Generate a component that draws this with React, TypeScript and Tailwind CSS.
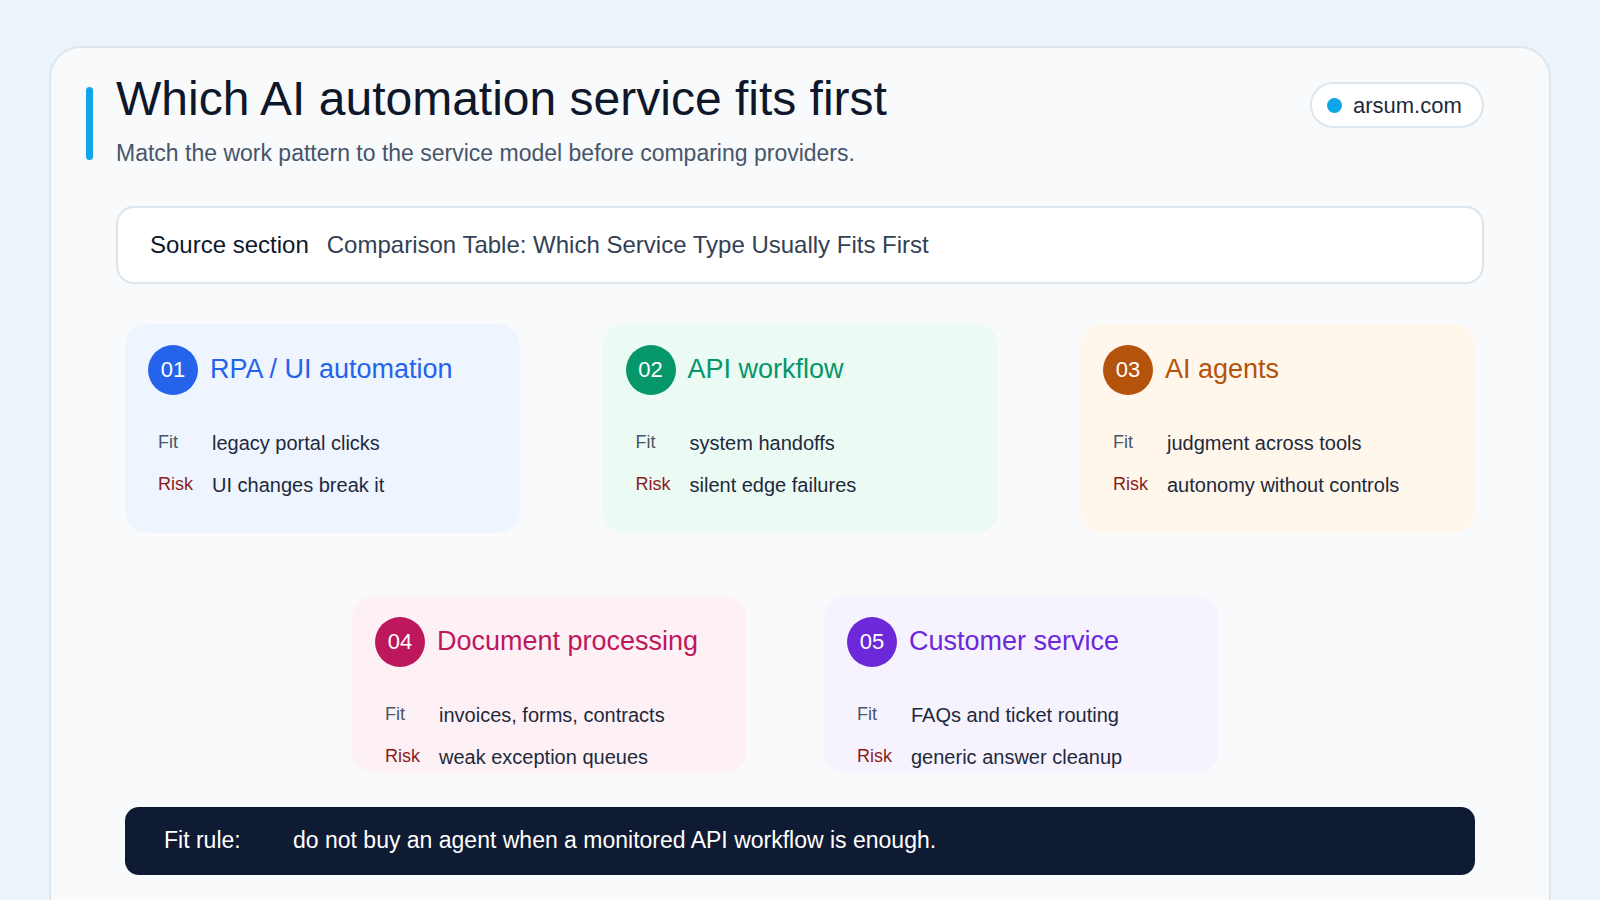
const cards = [
  { n: "01", t: "RPA / UI automation", fit: "legacy portal clicks", risk: "UI changes break it", bg: "bg-[#eef5ff]", c: "bg-[#2563eb]", tc: "text-[#2563eb]" },
  { n: "02", t: "API workflow", fit: "system handoffs", risk: "silent edge failures", bg: "bg-[#ebfbf3]", c: "bg-[#059669]", tc: "text-[#059669]" },
  { n: "03", t: "AI agents", fit: "judgment across tools", risk: "autonomy without controls", bg: "bg-[#fff7ec]", c: "bg-[#b4530b]", tc: "text-[#b4530b]" },
  { n: "04", t: "Document processing", fit: "invoices, forms, contracts", risk: "weak exception queues", bg: "bg-[#fdf1f6]", c: "bg-[#be185d]", tc: "text-[#be185d]" },
  { n: "05", t: "Customer service", fit: "FAQs and ticket routing", risk: "generic answer cleanup", bg: "bg-[#f6f3ff]", c: "bg-[#6d28d9]", tc: "text-[#6d28d9]" },
];

function Card({ d, h }: { d: (typeof cards)[number]; h: string }) {
  return (
    <div className={`${d.bg} ${h} w-[395px] rounded-[22px] pl-[23px] pt-[21px] overflow-hidden`}>
      <div className="flex items-center gap-[12px]">
        <div className={`${d.c} w-[50px] h-[50px] rounded-full text-white text-[22px] flex items-center justify-center`}>{d.n}</div>
        <div className={`${d.tc} text-[27px]`}>{d.t}</div>
      </div>
      <div className="mt-[36px] pl-[10px] flex flex-col gap-[18px] text-[20px] text-[#1e293b]">
        <div className="flex items-center h-[24px]"><span className="w-[54px] text-[18px] text-[#475569]">Fit</span><span>{d.fit}</span></div>
        <div className="flex items-center h-[24px]"><span className="w-[54px] text-[18px] text-[#8b1c1c]">Risk</span><span>{d.risk}</span></div>
      </div>
    </div>
  );
}

export default function App() {
  return (
    <div className="w-[1600px] h-[900px] overflow-hidden bg-[#eaf4fa] pt-[46px] pl-[49px]" style={{ fontFamily: '"Liberation Sans", Arial, sans-serif' }}>
      <div className="w-[1502px] h-[900px] bg-[#f8fafc] border-2 border-[#dde7ee] rounded-[32px] pl-[65px] pr-[65px] pt-[23px]">
        <div className="flex justify-between">
          <div className="relative">
            <div className="absolute left-[-30px] top-[16px] w-[7px] h-[73px] rounded-full bg-[#0ea5e9]" />
            <div className="text-[48px] leading-[56px] text-[#0f172a]">Which AI automation service fits first</div>
            <div className="text-[23px] text-[#475569] mt-[9px]">Match the work pattern to the service model before comparing providers.</div>
          </div>
          <div className="mt-[11px] h-[46px] w-[174px] border-2 border-[#dce6ee] rounded-full bg-white flex items-center pl-[15px] gap-[11px]">
            <div className="w-[15px] h-[15px] rounded-full bg-[#0ea5e9]" />
            <span className="text-[22px] text-[#1e293b]">arsum.com</span>
          </div>
        </div>
        <div className="mt-[35px] h-[78px] bg-white border-2 border-[#dde6ee] rounded-[18px] flex items-center pl-[32px] gap-[18px] text-[24px]">
          <span className="text-[#0f172a]">Source section</span>
          <span className="text-[#334155]">Comparison Table: Which Service Type Usually Fits First</span>
        </div>
        <div className="mt-[40px] px-[9px] flex justify-between">
          {cards.slice(0, 3).map((d) => <Card key={d.n} d={d} h="h-[209px]" />)}
        </div>
        <div className="mt-[63px] flex justify-center gap-[77px] pr-[29px]">
          {cards.slice(3).map((d) => <Card key={d.n} d={d} h="h-[177px]" />)}
        </div>
        <div className="mt-[34px] mx-[9px] h-[68px] rounded-[14px] bg-[#0f1b33] flex items-center pl-[39px] text-white text-[23px]">
          <span className="w-[129px]">Fit rule:</span>
          <span>do not buy an agent when a monitored API workflow is enough.</span>
        </div>
      </div>
    </div>
  );
}
